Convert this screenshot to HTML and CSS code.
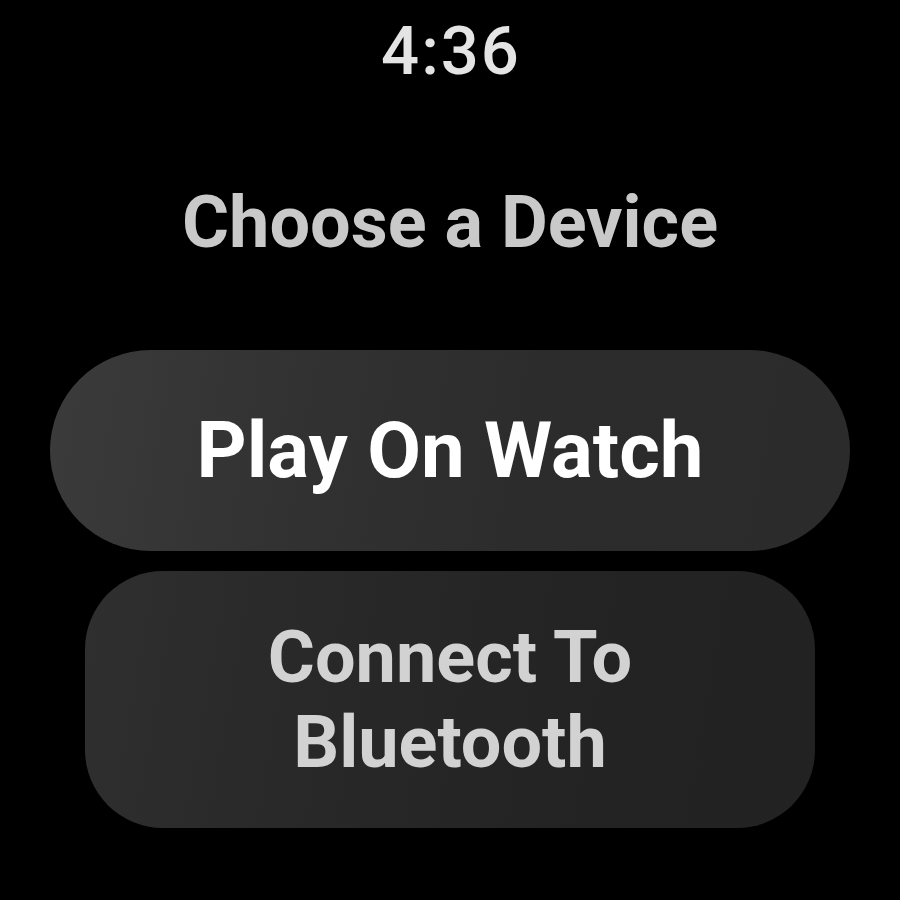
FILE: index.html
```html
<!DOCTYPE html>
<html>
<head>
<meta charset="utf-8">
<link rel="stylesheet" href="styles.css">
</head>
<body>
<div class="screen">
  <div class="time">4:36</div>
  <div class="title">Choose a Device</div>
  <div class="btn primary">Play On Watch</div>
  <div class="btn secondary">Connect To<br>Bluetooth</div>
</div>
</body>
</html>
```
FILE: styles.css
```css
html, body {
  margin: 0;
  padding: 0;
  background: #000;
}
.screen {
  width: 900px;
  height: 900px;
  background: #000;
  display: flex;
  flex-direction: column;
  align-items: center;
  font-family: Roboto, "Liberation Sans", sans-serif;
}
.time {
  margin-top: 18px;
  font-size: 67px;
  line-height: 67px;
  font-weight: 500;
  letter-spacing: 2px;
  padding-left: 2px;
  color: #e4e4e4;
}
.title {
  margin-top: 102px;
  font-size: 72px;
  line-height: 72px;
  font-weight: 700;
  color: #c9c9c9;
}
.btn {
  display: flex;
  align-items: center;
  justify-content: center;
  text-align: center;
  font-weight: 700;
  box-sizing: border-box;
}
.primary {
  margin-top: 91px;
  width: 800px;
  height: 201px;
  border-radius: 101px;
  background: linear-gradient(100deg, #3b3b3b 0%, #323232 30%, #2c2c2c 60%, #2b2b2b 100%);
  color: #ffffff;
  font-size: 78px;
  line-height: 78px;
}
.secondary {
  margin-top: 20px;
  width: 730px;
  height: 257px;
  border-radius: 78px;
  background: linear-gradient(100deg, #2f2f2f 0%, #282828 35%, #232323 70%, #222222 100%);
  color: #d2d2d2;
  font-size: 72px;
  line-height: 85px;
}
```
